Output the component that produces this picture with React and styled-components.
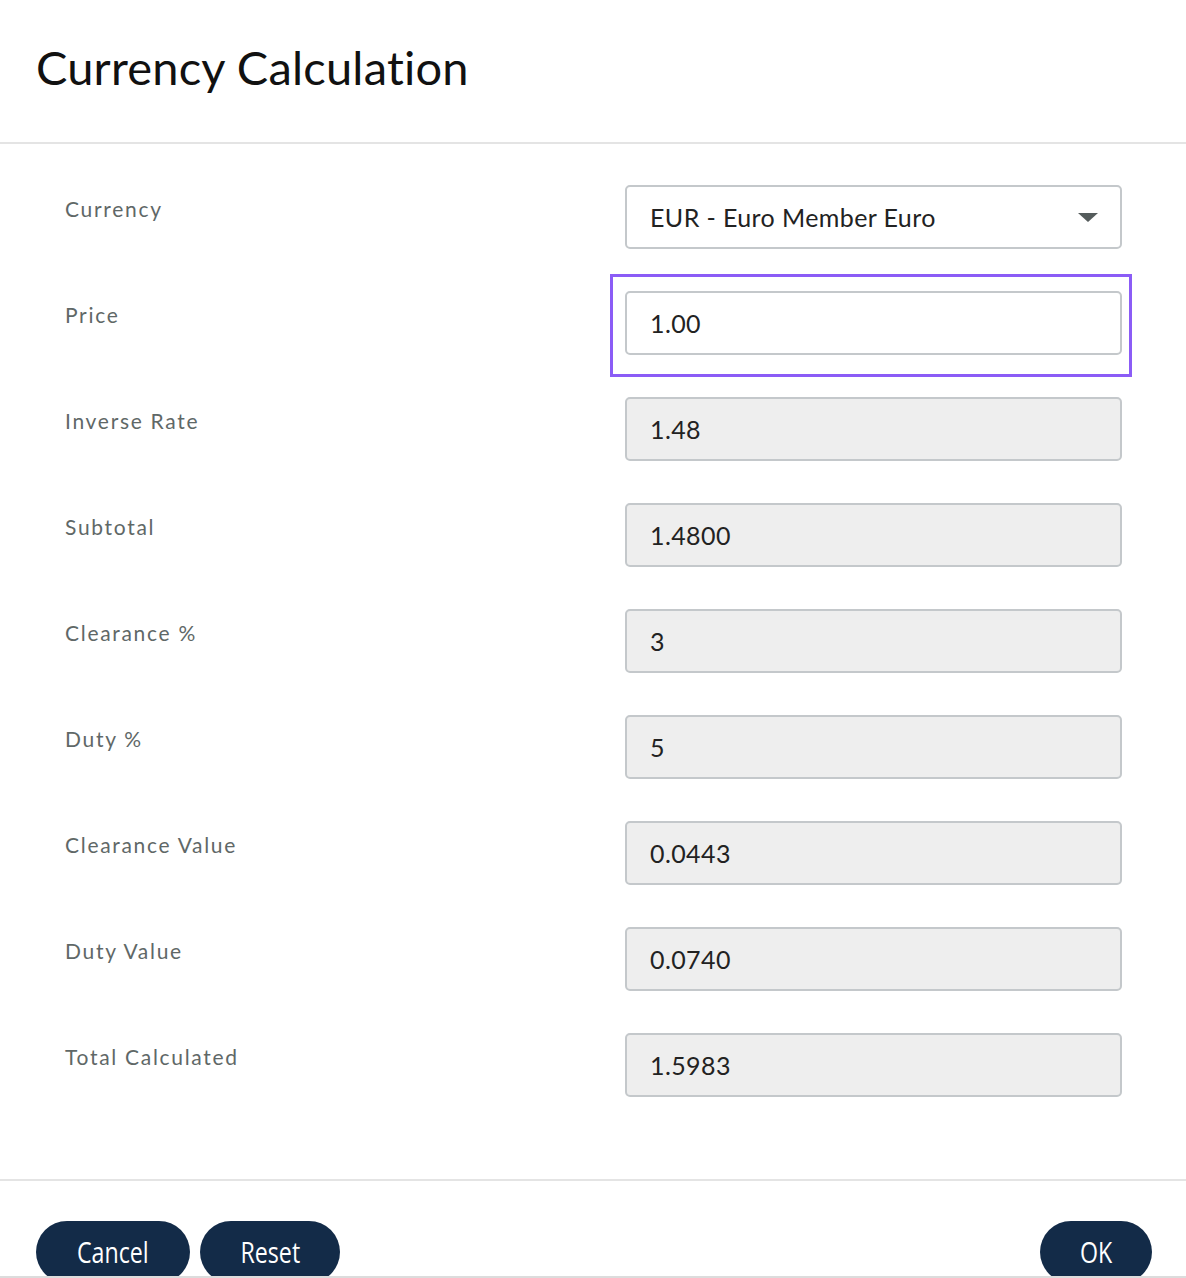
import React from "react";
import styled, { createGlobalStyle } from "styled-components";

const Global = createGlobalStyle`
  html, body { margin: 0; padding: 0; background: #ffffff; }
  body { font-family: Lato, "Noto Sans", sans-serif; color: #111; }
  * { box-sizing: border-box; }
`;

const Dialog = styled.div`
  width: 1186px;
  height: 1278px;
  display: flex;
  flex-direction: column;
  overflow: hidden;
  background: #fff;
  border-bottom: 2px solid #dcdcdc;
`;

const Header = styled.header`
  height: 144px;
  padding: 0 36px;
  display: flex;
  align-items: center;
  border-bottom: 2px solid #e4e4e4;
  flex-shrink: 0;
`;

const Title = styled.h1`
  margin: 0;
  font-family: Lato, "Noto Sans", sans-serif;
  font-weight: 400;
  font-size: 47px;
  letter-spacing: 0.2px;
  color: #111;
  padding-bottom: 8px;
`;

const Body = styled.div`
  padding: 41px 64px 82px 65px;
  display: flex;
  flex-direction: column;
  gap: 42px;
  border-bottom: 2px solid #e4e4e4;
  flex-shrink: 0;
`;

const Row = styled.div`
  display: grid;
  grid-template-columns: 1fr 497px;
  height: 64px;
`;

const Label = styled.label`
  font-size: 21px;
  letter-spacing: 1.7px;
  color: #5f6867;
  padding-top: 11px;
`;

const FieldWrap = styled.div`
  position: relative;
  ${(p) =>
    p.$focused &&
    `
    &::after {
      content: "";
      position: absolute;
      top: -17px;
      left: -15px;
      right: -10px;
      bottom: -22px;
      border: 3px solid #8b5cf6;
      pointer-events: none;
    }
  `}
`;

const Field = styled.div`
  height: 64px;
  display: flex;
  align-items: center;
  justify-content: space-between;
  padding: 0 24px 0 23px;
  border: 2px solid #c4c8cb;
  border-radius: 5px;
  background: ${(p) => (p.$readonly ? "#eeeeee" : "#ffffff")};
  font-size: 25px;
  letter-spacing: 0.4px;
  color: #222;
`;

const Caret = styled.span`
  width: 0;
  height: 0;
  border-left: 10px solid transparent;
  border-right: 10px solid transparent;
  border-top: 9px solid #555c5c;
  margin-right: -2px;
`;

const Footer = styled.footer`
  flex: 1;
  display: flex;
  align-items: flex-start;
  padding: 40px 34px 0 36px;
  gap: 10px;
`;

const Spacer = styled.div`
  flex: 1;
`;

const Button = styled.button`
  height: 62px;
  width: ${(p) => p.$w}px;
  border: none;
  border-radius: 31px;
  background: #132b48;
  color: #fff;
  font-family: "Open Sans", "Noto Sans", sans-serif;
  font-size: 29px;
  font-weight: 400;
  line-height: 1;
  padding: 0;
  display: flex;
  align-items: center;
  justify-content: center;
  cursor: pointer;
`;

const ButtonText = styled.span`
  display: inline-block;
  transform: scaleX(0.8);
  margin-top: -2px;
`;

const rows = [
  { label: "Currency", value: "EUR - Euro Member Euro", select: true },
  { label: "Price", value: "1.00", focused: true },
  { label: "Inverse Rate", value: "1.48", readonly: true },
  { label: "Subtotal", value: "1.4800", readonly: true },
  { label: "Clearance %", value: "3", readonly: true },
  { label: "Duty %", value: "5", readonly: true },
  { label: "Clearance Value", value: "0.0443", readonly: true },
  { label: "Duty Value", value: "0.0740", readonly: true },
  { label: "Total Calculated", value: "1.5983", readonly: true },
];

export default function App() {
  return (
    <>
      <Global />
      <Dialog>
        <Header>
          <Title>Currency Calculation</Title>
        </Header>
        <Body>
          {rows.map((r) => (
            <Row key={r.label}>
              <Label>{r.label}</Label>
              <FieldWrap $focused={r.focused}>
                <Field $readonly={r.readonly}>
                  <span>{r.value}</span>
                  {r.select && <Caret />}
                </Field>
              </FieldWrap>
            </Row>
          ))}
        </Body>
        <Footer>
          <Button $w={154}><ButtonText>Cancel</ButtonText></Button>
          <Button $w={140}><ButtonText>Reset</ButtonText></Button>
          <Spacer />
          <Button $w={112}><ButtonText>OK</ButtonText></Button>
        </Footer>
      </Dialog>
    </>
  );
}
